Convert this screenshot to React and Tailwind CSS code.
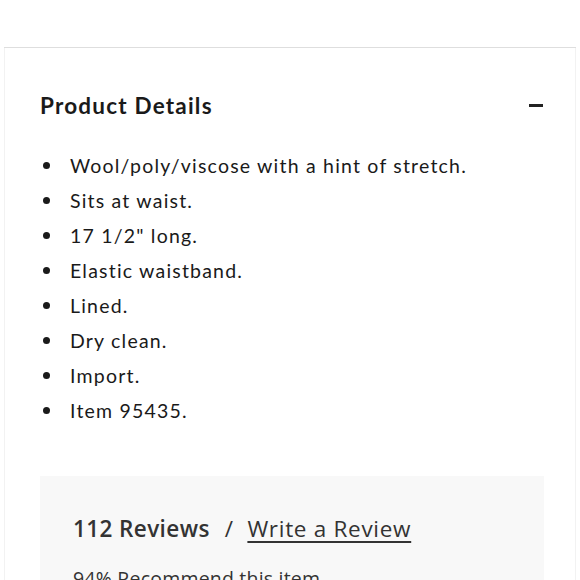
const details = [
  'Wool/poly/viscose with a hint of stretch.',
  'Sits at waist.',
  '17 1/2" long.',
  'Elastic waistband.',
  'Lined.',
  'Dry clean.',
  'Import.',
  'Item 95435.',
];

export default function App() {
  return (
    <div className="w-[580px] h-[580px] overflow-hidden bg-white px-1 font-['Lato',sans-serif] text-[#1a1a1a]">
      <div className="h-[48px] border-b-[1.5px] border-[#dedede]" />

      <div className="border-x border-[#f2f2f2] pl-[35px] pr-[32px] pt-[44px]">
        <div className="flex items-center justify-between h-[28px]">
          <h2 className="text-[22.5px] font-bold tracking-[1.2px]">Product Details</h2>
          <span className="block w-[14px] h-[3px] bg-[#222] mt-[-2px]" />
        </div>

        <ul className="mt-[28px]">
          {details.map((d) => (
            <li key={d} className="flex items-center h-[35px] text-[19.5px] tracking-[1.2px]">
              <span className="w-[7px] h-[7px] rounded-full bg-[#1a1a1a] ml-[3px] mr-[20px]" />
              {d}
            </li>
          ))}
        </ul>

        <div className="mt-[48px] w-[504px] bg-[#f8f8f8] pl-[33px] pt-[38px] pb-[40px] font-['Open_Sans',sans-serif] text-[#333]">
          <div className="flex items-center h-[30px] text-[22.5px] tracking-[0.4px]">
            <span className="font-semibold">112 Reviews</span>
            <span className="ml-[15px] mr-[14px]">/</span>
            <a href="#" className="underline underline-offset-[4px] decoration-[1.5px] tracking-[0.7px]">Write a Review</a>
          </div>
          <div className="mt-[20px] text-[19.5px] tracking-[0.2px]">94% Recommend this item</div>
        </div>
      </div>
    </div>
  );
}
